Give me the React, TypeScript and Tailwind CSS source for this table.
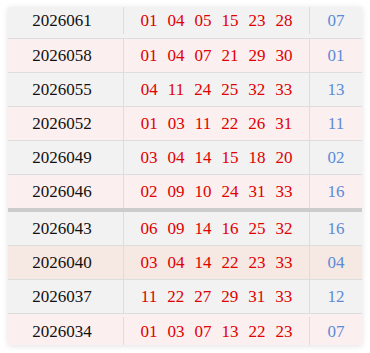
const rows = [
  { issue: "2026061", reds: ["01", "04", "05", "15", "23", "28"], blue: "07" },
  { issue: "2026058", reds: ["01", "04", "07", "21", "29", "30"], blue: "01" },
  { issue: "2026055", reds: ["04", "11", "24", "25", "32", "33"], blue: "13" },
  { issue: "2026052", reds: ["01", "03", "11", "22", "26", "31"], blue: "11" },
  { issue: "2026049", reds: ["03", "04", "14", "15", "18", "20"], blue: "02" },
  { issue: "2026046", reds: ["02", "09", "10", "24", "31", "33"], blue: "16" },
  { issue: "2026043", reds: ["06", "09", "14", "16", "25", "32"], blue: "16" },
  { issue: "2026040", reds: ["03", "04", "14", "22", "23", "33"], blue: "04" },
  { issue: "2026037", reds: ["11", "22", "27", "29", "31", "33"], blue: "12" },
  { issue: "2026034", reds: ["01", "03", "07", "13", "22", "23"], blue: "07" },
];

function Row({ r, i }: { r: (typeof rows)[number]; i: number }) {
  const bg = i === 7 ? "bg-[#f6e8e3]" : i % 2 === 0 ? "bg-[#f2f2f2]" : "bg-[#fcefef]";
  const last = i === rows.length - 1;
  let size = "h-[34px] border-b border-[#dddddd]";
  if (i === 0) size = "h-[32px] pb-[4px] border-b border-[#dddddd]";
  if (i === 5) size = "h-[37px] border-b-4 border-[#cccccc]";
  if (last) size = "h-[31px] pt-[3px]";
  return (
    <div className={`flex items-stretch ${bg} ${size}`}>
      <div className="w-[116px] flex items-center justify-center pr-[7px] border-r border-[#dddddd] text-[#111]">
        {r.issue}
      </div>
      <div className="w-[186px] flex items-center justify-center gap-[10px] border-r border-[#dddddd] text-[#e00000]">
        {r.reds.map((n, k) => (
          <span key={k}>{n}</span>
        ))}
      </div>
      <div className="flex-1 flex items-center justify-center text-[#5b8bd8]">{r.blue}</div>
    </div>
  );
}

export default function App() {
  return (
    <div className="w-[370px] h-[353px] bg-white pt-[7px] px-[8px]">
      <div
        className="shadow-[0_1px_6px_rgba(0,0,0,0.12)] text-[17px] leading-none"
        style={{ fontFamily: '"Liberation Serif", "Noto Sans CJK SC", serif' }}
      >
        {rows.map((r, i) => (
          <Row key={r.issue} r={r} i={i} />
        ))}
      </div>
    </div>
  );
}
